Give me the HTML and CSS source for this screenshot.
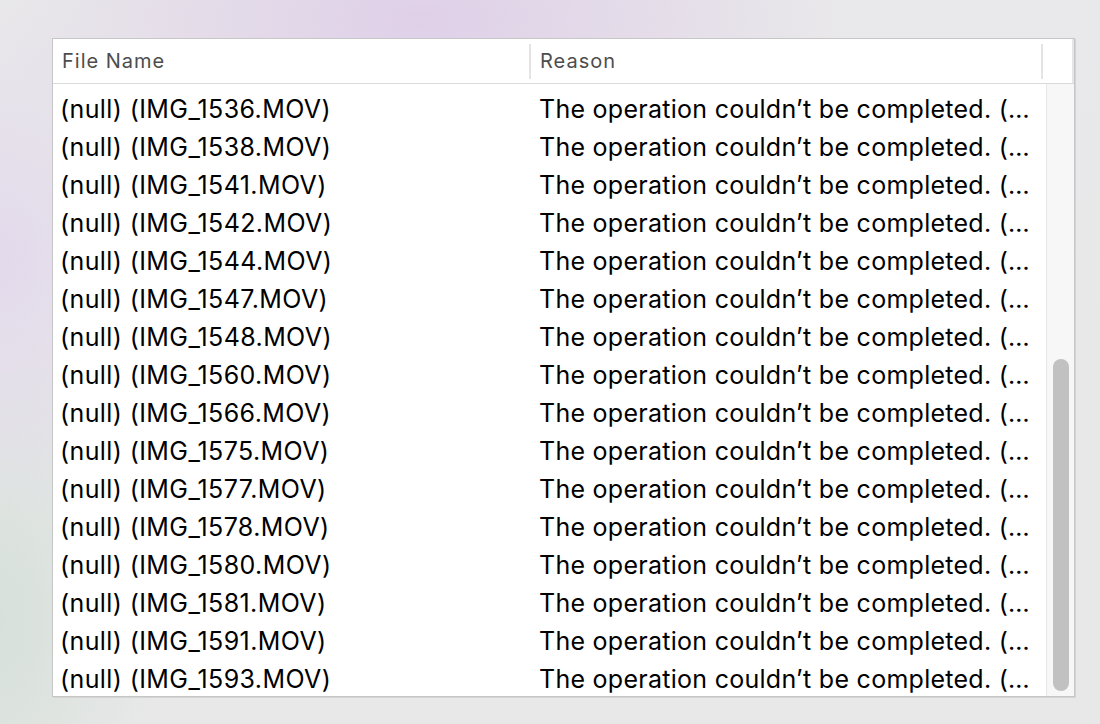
FILE: index.html
```html
<!DOCTYPE html>
<html>
<head>
<meta charset="utf-8">
<link rel="stylesheet" href="styles.css">
</head>
<body>
<div class="panel">
  <div class="header">
    <div class="hcell c1">File Name</div>
    <div class="sep"></div>
    <div class="hcell c2">Reason</div>
    <div class="sep"></div>
    <div class="hcell c3"></div>
  </div>
  <div class="body">
    <div class="rows">
      <div class="row"><div class="cell c1">(null) (IMG_1536.MOV)</div><div class="cell c2">The operation couldn’t be completed. (…</div></div>
      <div class="row"><div class="cell c1">(null) (IMG_1538.MOV)</div><div class="cell c2">The operation couldn’t be completed. (…</div></div>
      <div class="row"><div class="cell c1">(null) (IMG_1541.MOV)</div><div class="cell c2">The operation couldn’t be completed. (…</div></div>
      <div class="row"><div class="cell c1">(null) (IMG_1542.MOV)</div><div class="cell c2">The operation couldn’t be completed. (…</div></div>
      <div class="row"><div class="cell c1">(null) (IMG_1544.MOV)</div><div class="cell c2">The operation couldn’t be completed. (…</div></div>
      <div class="row"><div class="cell c1">(null) (IMG_1547.MOV)</div><div class="cell c2">The operation couldn’t be completed. (…</div></div>
      <div class="row"><div class="cell c1">(null) (IMG_1548.MOV)</div><div class="cell c2">The operation couldn’t be completed. (…</div></div>
      <div class="row"><div class="cell c1">(null) (IMG_1560.MOV)</div><div class="cell c2">The operation couldn’t be completed. (…</div></div>
      <div class="row"><div class="cell c1">(null) (IMG_1566.MOV)</div><div class="cell c2">The operation couldn’t be completed. (…</div></div>
      <div class="row"><div class="cell c1">(null) (IMG_1575.MOV)</div><div class="cell c2">The operation couldn’t be completed. (…</div></div>
      <div class="row"><div class="cell c1">(null) (IMG_1577.MOV)</div><div class="cell c2">The operation couldn’t be completed. (…</div></div>
      <div class="row"><div class="cell c1">(null) (IMG_1578.MOV)</div><div class="cell c2">The operation couldn’t be completed. (…</div></div>
      <div class="row"><div class="cell c1">(null) (IMG_1580.MOV)</div><div class="cell c2">The operation couldn’t be completed. (…</div></div>
      <div class="row"><div class="cell c1">(null) (IMG_1581.MOV)</div><div class="cell c2">The operation couldn’t be completed. (…</div></div>
      <div class="row"><div class="cell c1">(null) (IMG_1591.MOV)</div><div class="cell c2">The operation couldn’t be completed. (…</div></div>
      <div class="row"><div class="cell c1">(null) (IMG_1593.MOV)</div><div class="cell c2">The operation couldn’t be completed. (…</div></div>
    </div>
    <div class="track"><div class="thumb"></div></div>
  </div>
</div>
</body>
</html>
```
FILE: styles.css
```css
html, body {
  margin: 0;
  padding: 0;
}
body {
  width: 1100px;
  height: 724px;
  overflow: hidden;
  font-family: "Inter", "Liberation Sans", Arial, sans-serif;
  background:
    radial-gradient(ellipse 420px 200px at 420px 20px, rgba(222, 205, 232, 0.9), rgba(222, 205, 232, 0) 100%),
    radial-gradient(ellipse 200px 260px at 0px 260px, rgba(226, 216, 236, 0.9), rgba(226, 216, 236, 0) 100%),
    radial-gradient(ellipse 160px 300px at 0px 620px, rgba(214, 224, 218, 0.95), rgba(214, 224, 218, 0) 100%),
    linear-gradient(180deg, #e9e8ea 0%, #e8e8e8 100%);
}
.panel {
  margin: 38px 0 0 52px;
  width: 1021px;
  height: 657px;
  border: 1px solid #c6c6c6;
  box-shadow: 1px 1px 0 #d4d4d4;
  background: #ffffff;
  display: flex;
  flex-direction: column;
}
.header {
  height: 44px;
  border-bottom: 1px solid #d9d9d9;
  display: flex;
  align-items: center;
  flex-shrink: 0;
}
.hcell {
  font-size: 20px;
  letter-spacing: 1px;
  color: #4d4d4d;
  box-sizing: border-box;
}
.hcell.c1 {
  width: 476px;
  padding-left: 9px;
}
.hcell.c2 {
  width: 510px;
  padding-left: 9px;
}
.hcell.c3 {
  flex: 1;
  align-self: stretch;
  border-right: 2px solid #e6e6e6;
}
.sep {
  width: 2px;
  height: 35px;
  background: #e4e4e4;
}
.body {
  flex: 1;
  display: flex;
  min-height: 0;
}
.rows {
  flex: 1;
  overflow: hidden;
  padding-top: 6px;
}
.row {
  height: 38px;
  display: flex;
  align-items: center;
  font-size: 25px;
  letter-spacing: 0.4px;
  color: #000;
  white-space: nowrap;
}
.cell {
  box-sizing: border-box;
  overflow: hidden;
}
.cell.c1 {
  width: 477px;
  padding-left: 7px;
}
.cell.c2 {
  flex: 1;
  padding-left: 9px;
  letter-spacing: 0.27px;
}
.track {
  width: 28px;
  box-sizing: border-box;
  border-left: 1px solid #e8e8e8;
  background: #f7f7f7;
  display: flex;
  flex-direction: column;
  justify-content: flex-end;
  padding: 0 0 5px 6px;
}
.thumb {
  width: 16px;
  height: 332px;
  border-radius: 8px;
  background: #c1c1c1;
}
```
